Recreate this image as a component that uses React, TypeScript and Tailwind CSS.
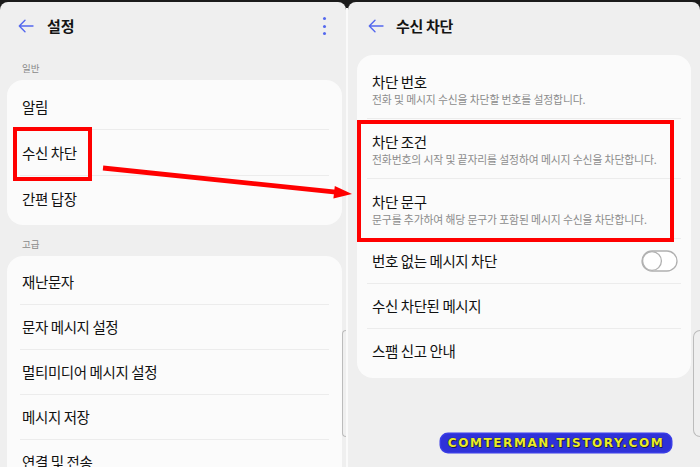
import React from "react";

const font = "font-['Noto_Sans_CJK_KR','Noto_Sans',sans-serif]";

function BackArrow() {
  return (
    <svg width="16" height="14" viewBox="0 0 16 14" fill="none" stroke="#5468ee" strokeWidth="1.4" strokeLinecap="round" strokeLinejoin="round">
      <path d="M15 7H1.5M7 1.3L1.3 7L7 12.7" />
    </svg>
  );
}

function Row({ label }: { label: string }) {
  return (
    <div className="flex h-[45px] items-center px-[15px]">
      <span className="text-[14.5px] leading-[18px] tracking-[-0.4px] text-[#111]">{label}</span>
    </div>
  );
}

function Divider({ inset = "mx-[13px]" }: { inset?: string }) {
  return <div className={`${inset} h-px bg-[#ececec]`} />;
}

function DetailRow({ title, desc, h }: { title: string; desc: string; h: string }) {
  return (
    <div className={`${h} px-[15px] pt-[14px]`}>
      <div className="text-[14.5px] leading-[18px] tracking-[-0.4px] text-[#111]">{title}</div>
      <div className="mt-[2px] text-[10.8px] leading-[13px] tracking-[-0.1px] text-[#8c8c8c]">{desc}</div>
    </div>
  );
}

function Toggle() {
  return (
    <svg width="37" height="22" viewBox="0 0 37 22" fill="none">
      <rect x="1" y="1" width="35" height="20" rx="10" fill="#fff" stroke="#b0b0b0" strokeWidth="1.3" />
      <circle cx="11" cy="11" r="9.4" fill="#fff" stroke="#b0b0b0" strokeWidth="1.3" />
    </svg>
  );
}

function EdgeHandle({ cls }: { cls: string }) {
  return (
    <div className={`absolute top-[328px] h-[107px] rounded-l-[8px] border-y border-l border-[#bcbcbc] ${cls}`} />
  );
}

function LeftPanel() {
  const general = ["알림", "수신 차단", "간편 답장"];
  const advanced = ["재난문자", "문자 메시지 설정", "멀티미디어 메시지 설정", "메시지 저장", "연결 및 전송"];
  return (
    <div className="relative h-[465px] w-[346px] shrink-0 overflow-hidden rounded-t-[8px] bg-[#efefef]">
      <div className="flex h-[48px] items-center pl-[18px] pr-[18px]">
        <BackArrow />
        <span className="ml-[13px] text-[15px] font-bold leading-[20px] text-[#141414]">설정</span>
        <div className="ml-auto flex flex-col items-center gap-[4.5px] pr-[2px]">
          <span className="h-[3px] w-[3px] rounded-full bg-[#5468ee]" />
          <span className="h-[3px] w-[3px] rounded-full bg-[#5468ee]" />
          <span className="h-[3px] w-[3px] rounded-full bg-[#5468ee]" />
        </div>
      </div>
      <div className="mt-[12px] h-[12px] pl-[22px] text-[9.5px] leading-[12px] text-[#8a8a8a]">일반</div>
      <div className="ml-[7px] mr-[4px] mt-[6px] rounded-[16px] bg-[#fbfbfb] py-[4px]">
        {general.map((g, i) => (
          <React.Fragment key={g}>
            {i > 0 && <Divider />}
            <Row label={g} />
          </React.Fragment>
        ))}
      </div>
      <div className="mt-[13px] h-[12px] pl-[22px] text-[9.5px] leading-[12px] text-[#8a8a8a]">고급</div>
      <div className="ml-[7px] mr-[4px] mt-[6px] rounded-[16px] bg-[#fbfbfb] py-[4px]">
        {advanced.map((g, i) => (
          <React.Fragment key={g}>
            {i > 0 && <Divider />}
            <div className="flex h-[44px] items-center px-[15px]">
              <span className="text-[14.5px] leading-[18px] tracking-[-0.4px] text-[#111]">{g}</span>
            </div>
          </React.Fragment>
        ))}
      </div>
      <EdgeHandle cls="right-0 w-[4px]" />
    </div>
  );
}

function RightPanel() {
  return (
    <div className="relative h-[465px] flex-1 overflow-hidden rounded-t-[8px] bg-[#efefef]">
      <div className="flex h-[48px] items-center pl-[20px]">
        <BackArrow />
        <span className="ml-[12px] text-[15px] font-bold leading-[20px] tracking-[-0.3px] text-[#141414]">수신 차단</span>
      </div>
      <div className="ml-[9px] mr-[9px] mt-[5px] rounded-[16px] bg-[#fbfbfb] pb-[5px] pt-[4px]">
        <DetailRow h="h-[59px]" title="차단 번호" desc="전화 및 메시지 수신을 차단할 번호를 설정합니다." />
        <Divider inset="mx-[10px]" />
        <DetailRow h="h-[59px]" title="차단 조건" desc="전화번호의 시작 및 끝자리를 설정하여 메시지 수신을 차단합니다." />
        <Divider inset="mx-[10px]" />
        <DetailRow h="h-[59px]" title="차단 문구" desc="문구를 추가하여 해당 문구가 포함된 메시지 수신을 차단합니다." />
        <Divider inset="mx-[10px]" />
        <div className="flex h-[44px] items-center justify-between pl-[15px] pr-[13px]">
          <span className="text-[14.5px] leading-[18px] tracking-[-0.4px] text-[#111]">번호 없는 메시지 차단</span>
          <Toggle />
        </div>
        <Divider inset="mx-[10px]" />
        <div className="flex h-[44px] items-center px-[15px]">
          <span className="text-[14.5px] leading-[18px] tracking-[-0.4px] text-[#111]">수신 차단된 메시지</span>
        </div>
        <Divider inset="mx-[10px]" />
        <div className="flex h-[44px] items-center px-[15px]">
          <span className="text-[14.5px] leading-[18px] tracking-[-0.4px] text-[#111]">스팸 신고 안내</span>
        </div>
      </div>
      <EdgeHandle cls="right-0 w-[7px]" />
      <div className="absolute left-[93px] top-[432px] flex h-[18px] w-[230px] items-center justify-center rounded-[7px] bg-[#2f32d8] shadow-[0_0_0_1.5px_#3a3de6]">
        <span className="font-['DejaVu_Sans',sans-serif] text-[12px] font-bold leading-[14px] tracking-[1.6px] text-[#e9ec2a] [text-shadow:0_0_1px_#111,1px_1px_0_#1a1a60]">
          COMTERMAN.TISTORY.COM
        </span>
      </div>
    </div>
  );
}

export default function App() {
  return (
    <div className={`relative h-[467px] w-[700px] overflow-hidden bg-[#1b1b1b] pt-[2px] ${font}`}>
      <div className="flex">
        <LeftPanel />
        <div className="mt-[6px] h-[459px] w-[2px] bg-[#fafafa]" />
        <RightPanel />
      </div>
      {/* annotations */}
      <div className="absolute left-[13px] top-[127px] h-[54px] w-[79px] border-[4.5px] border-[#ff0000]" />
      <div className="absolute left-[357px] top-[120px] h-[122px] w-[317px] border-[4.5px] border-[#ff0000]" />
      <svg className="absolute left-0 top-0" width="700" height="467" viewBox="0 0 700 467">
        <line x1="103" y1="168" x2="336" y2="192.2" stroke="#ff0000" strokeWidth="4.8" />
        <polygon points="352,194 334.8,186 333.4,198.4" fill="#ff0000" />
      </svg>
    </div>
  );
}
